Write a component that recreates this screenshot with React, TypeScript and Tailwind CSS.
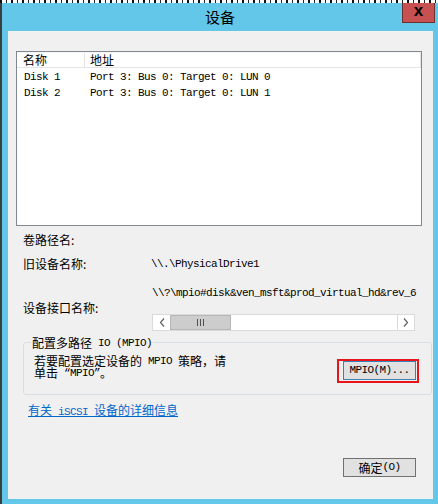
import React from "react";

const M = ({ children }: { children: React.ReactNode }) => (
  <span className="font-['Liberation_Mono',monospace] text-[11px] tracking-[-0.6px]">{children}</span>
);

export default function App() {
  return (
    <div className="w-[438px] h-[504px] flex flex-col overflow-hidden bg-[#63c7e9] font-['Noto_Sans_CJK_SC','Noto_Sans',sans-serif] text-[12px] text-black leading-none">
      <div className="h-[3px] w-full bg-[repeating-linear-gradient(90deg,#111_0_2px,#fff_2px_6px,#222_6px_7px,#fff_7px_11px)]" />
      <div className="flex flex-1">
        <div className="w-[2px] bg-[#3a3f42]" />
        <div className="flex-1 flex flex-col pl-[6px] pr-[5px] pb-[5px]">
          <div className="relative h-[28px] flex items-center justify-center -ml-[6px] -mr-[5px]">
            <span className="text-[15px] text-black mt-[-2px]">设备</span>
            <div className="absolute right-[3px] top-0 w-[33px] h-[20px] bg-[#c75050] border border-[#6b3030] border-t-0 flex items-center justify-center">
              <span className="font-['Liberation_Sans',sans-serif] font-bold text-[17px] leading-none mt-[-4px]">x</span>
            </div>
          </div>
          <div className="flex-1 bg-[#f0f0f0] flex flex-col pt-[20px] pl-[8px]">
            {/* list */}
            <div className="w-[406px] h-[175px] border border-[#828790] bg-white flex flex-col">
              <div className="h-[16px] flex border-b border-[#e5e5e5] border-t border-t-[#f5f5f5]">
                <div className="w-[68px] border-r border-[#e5e5e5] pl-[6px] flex items-center">名称</div>
                <div className="flex-1 pl-[5px] flex items-center border-r border-[#e5e5e5]">地址</div>
              </div>
              {[
                ["Disk 1", "Port 3: Bus 0: Target 0: LUN 0"],
                ["Disk 2", "Port 3: Bus 0: Target 0: LUN 1"],
              ].map(([a, b]) => (
                <div key={a} className="h-[16px] flex items-center whitespace-pre">
                  <div className="w-[67px] pl-[7px]"><M>{a}</M></div>
                  <div className="pl-[6px]"><M>{b}</M></div>
                </div>
              ))}
            </div>

            <div className="pl-[7px]">
              <div className="h-[16px] mt-[6px] flex items-center">卷路径名:</div>
              <div className="h-[16px] mt-[8px] flex items-center">
                <div className="w-[128px]">旧设备名称:</div>
                <M>\\.\PhysicalDrive1</M>
              </div>
              <div className="mt-[13px] flex">
                <div className="w-[129px] flex items-center">设备接口名称:</div>
                <div className="flex flex-col">
                  <div className="h-[16px] w-[265px] overflow-hidden whitespace-nowrap flex items-center">
                    <M>\\?\mpio#disk&ven_msft&prod_virtual_hd&rev_6</M>
                  </div>
                  <div className="mt-[13px] h-[17px] w-[263px] border border-[#dadada] bg-white flex">
                    <div className="w-[17px] flex items-center justify-center">
                      <svg width="6" height="9" viewBox="0 0 6 9"><polyline points="5,0.5 1.5,4.5 5,8.5" fill="none" stroke="#606060" strokeWidth="1.2" /></svg>
                    </div>
                    <div className="w-[61px] bg-[#cdcdcd] border border-[#b6b6b6] flex items-center justify-center gap-[2px]">
                      <div className="w-[1px] h-[7px] bg-[#505050]" />
                      <div className="w-[1px] h-[7px] bg-[#505050]" />
                      <div className="w-[1px] h-[7px] bg-[#505050]" />
                    </div>
                    <div className="flex-1 border-r border-[#dadada]" />
                    <div className="w-[16px] flex items-center justify-center">
                      <svg width="6" height="9" viewBox="0 0 6 9"><polyline points="1,0.5 4.5,4.5 1,8.5" fill="none" stroke="#606060" strokeWidth="1.2" /></svg>
                    </div>
                  </div>
                </div>
              </div>
            </div>

            {/* group box */}
            <div className="relative ml-[7px] mt-[11px] w-[409px] h-[53px] border border-[#d5dfe5] rounded-[3px]">
              <div className="absolute left-[7px] top-[-8px] px-[1px] bg-[#f0f0f0] h-[16px] flex items-center whitespace-pre">
                配置多路径<M> IO (MPIO)</M>
              </div>
              <div className="absolute left-[10px] top-[12px] whitespace-pre flex flex-col">
                <div className="h-[12px] flex items-center">若要配置选定设备的<M> MPIO </M>策略，请</div>
                <div className="h-[12px] flex items-center">单击<M> “MPIO”</M>。</div>
              </div>
              <div className="absolute left-[319px] top-[18px] w-[73px] h-[19px] bg-[#e1e1e1] border border-[#3c7fb1] flex items-center justify-center whitespace-pre">
                <M>MPIO(M)...</M>
              </div>
              <div className="absolute left-[313px] top-[16px] w-[82px] h-[24px] border-2 border-[#e8141c]" />
            </div>

            <div className="ml-[12px] mt-[8px] h-[16px] flex items-center">
              <span className="text-[#0066cc] underline underline-offset-1 decoration-[#0066cc] whitespace-pre">有关<M> iSCSI </M>设备的详细信息</span>
            </div>

            <div className="ml-[327px] mt-[39px] w-[73px] h-[19px] bg-[#e1e1e1] border border-[#707070] flex items-center justify-center">
              确定<M>(O)</M>
            </div>
          </div>
        </div>
      </div>
    </div>
  );
}
